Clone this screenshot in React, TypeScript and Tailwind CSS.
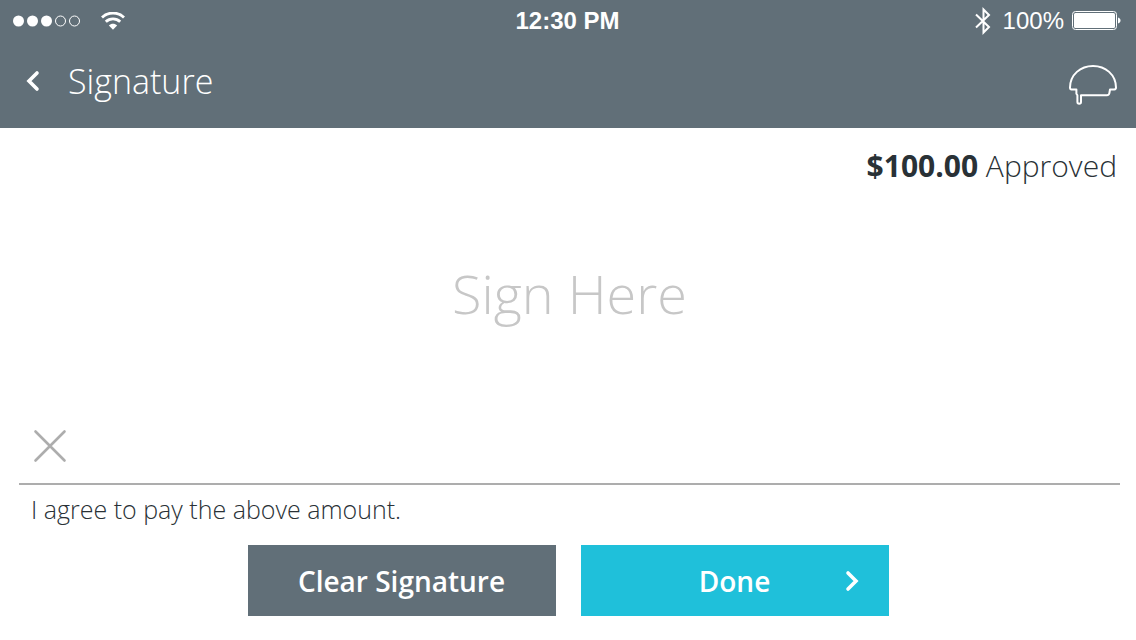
import React from "react";

const signalDots = [true, true, true, false, false];

const SignalDots = () => (
  <svg width="68" height="12" viewBox="0 0 68 12" role="img" aria-label="Signal strength">
    {signalDots.map((filled, index) => (
      <circle
        key={index}
        cx={5.5 + index * 14}
        cy="6"
        r={filled ? 5.5 : 5}
        fill={filled ? "white" : "none"}
        stroke={filled ? "none" : "white"}
      />
    ))}
  </svg>
);

const WifiIcon = () => (
  <svg width="24" height="18" viewBox="0 0 24 18" fill="none" stroke="white" strokeWidth="2.8" aria-hidden="true">
    <path d="M1 5.400C7-.4 17-.4 23 5.400" />
    <path d="M4.800 9.700c4-3.900 10.400-3.900 14.400 0" />
    <path d="M7.900 13.600c2.300-2.500 5.900-2.500 8.200 0L12 17.800z" fill="white" stroke="none" />
  </svg>
);

const BluetoothIcon = () => (
  <svg width="16" height="28" viewBox="0 0 16 28" fill="none" stroke="white" strokeWidth="2" aria-hidden="true">
    <path d="M1 7.500 14 20 8.500 25.500V2.500L14 8 1 20.500" />
  </svg>
);

const BatteryIcon = () => (
  <svg width="50" height="20" viewBox="0 0 50 20" role="img" aria-label="Battery full">
    <rect x="0.5" y="0.5" width="44" height="18" rx="3" fill="none" stroke="white" />
    <rect x="2" y="2" width="41" height="15" rx="1.5" fill="white" />
    <path d="M46 6.5c3.4.8 3.4 5.2 0 6z" fill="white" />
  </svg>
);

const HelmetIcon = () => (
  <svg width="50" height="40" viewBox="0 0 50 40" fill="none" stroke="white" strokeWidth="2" strokeLinejoin="round" aria-hidden="true">
    <path d="M3.500 24.500h4.900v4.200l1 1.500v6.800q0 1.700 1.800 1.700t1.800-1.700v-6.800H38.800q2.400 0 2.600-2.200l.6-3.500h4.300q1.700-.2 1.700-2C47.800 9.500 37.500 1 25 1S2.200 9.500 2 22.500q0 2 1.500 2z" />
  </svg>
);

const Chevron = ({ direction }: { direction: "left" | "right" }) => (
  <svg width="14" height="22" viewBox="0 0 14 22" fill="none" stroke="white" strokeWidth="3.6" strokeLinecap="round" strokeLinejoin="miter" aria-hidden="true">
    <path d={direction === "left" ? "M11 3 3 11l8 8" : "M3 3l8 8-8 8"} />
  </svg>
);

const Header = () => (
  <header className="h-32 bg-[#616f78] text-white">
    <div className="grid h-[42px] grid-cols-3 items-center pl-[13px] pr-[14px] font-['Liberation_Sans',Arial,sans-serif] text-2xl leading-10">
      <div className="flex items-center gap-5">
        <SignalDots />
        <WifiIcon />
      </div>
      <p className="text-center font-bold">12:30 PM</p>
      <div className="flex items-center justify-end gap-2">
        <BluetoothIcon />
        <span className="pl-1">100%</span>
        <BatteryIcon />
      </div>
    </div>
    <nav className="flex h-[78px] items-center justify-between pl-6 pr-[18px]">
      <div className="flex items-center gap-[26px]">
        <button type="button" aria-label="Back" className="px-0.5">
          <Chevron direction="left" />
        </button>
        <h1 className="text-[34px] font-light leading-10">Signature</h1>
      </div>
      <button type="button" aria-label="Home" className="pt-2">
        <HelmetIcon />
      </button>
    </nav>
  </header>
);

const SignaturePad = () => (
  <section aria-label="Signature" className="flex flex-1 flex-col border-b-2 border-[#adadad]">
    <p className="flex flex-1 items-center justify-center pb-7 text-[54px] font-light text-[#c7c7c7]">
      Sign Here
    </p>
    <svg className="mb-5 ml-3.5" width="34" height="34" viewBox="0 0 34 34" fill="none" stroke="#adadad" strokeWidth="2.6" strokeLinecap="round" aria-hidden="true">
      <path d="M2.500 2.500l29 29M31.500 2.500l-29 29" />
    </svg>
  </section>
);

const App = () => {
  return (
    <div className="flex min-h-screen flex-col bg-white font-['Open_Sans','Noto_Sans',sans-serif] text-[#293136]">
      <Header />
      <main className="flex flex-1 flex-col pb-6 pl-[19px] pr-4">
        <p className="pr-[3px] pt-[18px] text-right text-[30px] font-light leading-10">
          <strong className="font-bold">$100.00</strong> Approved
        </p>
        <SignaturePad />
        <p className="pl-3 pt-1 text-[25px] font-light leading-10">
          I agree to pay the above amount.
        </p>
        <div className="flex justify-center gap-[25px] pr-[3px] pt-4">
          <button type="button" className="h-[71px] w-[308px] bg-[#616f78] text-[28px] font-semibold text-white">
            Clear Signature
          </button>
          <button
            type="button"
            className="grid h-[71px] w-[308px] grid-cols-[1fr_auto_1fr] items-center bg-[#1fc0da] px-[30px] text-[28px] font-semibold text-white"
          >
            <span className="col-start-2">Done</span>
            <span className="justify-self-end">
              <Chevron direction="right" />
            </span>
          </button>
        </div>
      </main>
    </div>
  );
};

export default App;
